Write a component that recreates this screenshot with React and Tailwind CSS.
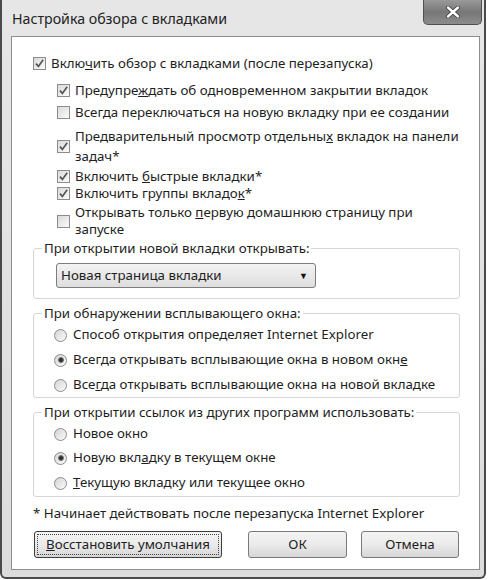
import React from "react";

const TEXT = "text-[13.3px] text-[#1e1e1e]";

function Check({ checked }) {
  return (
    <span className="flex h-[13px] w-[13px] shrink-0 items-center justify-center border border-[#8c8c8c] bg-linear-to-br from-[#d9d9d9] to-[#fbfbfb]">
      {checked && (
        <svg width="11" height="11" viewBox="0 0 11 11">
          <path d="M2 5.6 L4.4 8.4 L9.2 1.8" fill="none" stroke="#555" strokeWidth="1.7" />
        </svg>
      )}
    </span>
  );
}

function Radio({ on }) {
  return (
    <span className="flex h-[13px] w-[13px] shrink-0 items-center justify-center rounded-full border border-[#8c8c8c] bg-linear-to-br from-[#d4d4d4] to-[#fbfbfb]">
      {on && <span className="h-[6px] w-[6px] rounded-full border border-[#777] bg-[#2e2e2e]" />}
    </span>
  );
}

function CheckRow({ checked, indent, className, children }) {
  return (
    <div className={`flex items-center gap-[5px] ${indent ? "ml-[24px]" : ""} ${className}`}>
      <Check checked={checked} />
      <span>{children}</span>
    </div>
  );
}

function RadioRow({ on, className, children }) {
  return (
    <div className={`ml-[12px] flex h-[18px] items-center gap-[6px] ${className}`}>
      <Radio on={on} />
      <span>{children}</span>
    </div>
  );
}

function Group({ title, className, children }) {
  return (
    <fieldset className={`rounded-[3px] border border-[#d6d6d6] pl-[8px] pr-[8px] ${className}`}>
      <legend className="px-[2px] leading-[18px]">{title}</legend>
      {children}
    </fieldset>
  );
}

function Button({ focused, className, children }) {
  return (
    <div
      className={`flex h-[27px] rounded-[3px] border bg-linear-to-b from-[#f4f4f4] via-[#ebebeb] to-[#d6d6d6] ${
        focused ? "border-[#3c3c3c]" : "border-[#7a7a7a]"
      } ${className}`}
    >
      <div
        className={`m-[2px] flex flex-1 items-center justify-center border ${
          focused ? "border-dotted border-[#444]" : "border-transparent"
        }`}
      >
        {children}
      </div>
    </div>
  );
}

export default function App() {
  return (
    <div className="h-[580px] w-[489px] bg-white">
      <div className="flex h-[579px] w-[486px] flex-col rounded-b-[6px] border-x-2 border-b-2 border-[#4a4a4a] bg-linear-to-b from-[#e6e6e6] to-[#dcdcdc] font-['Noto_Sans','Liberation_Sans',sans-serif]">
        {/* Title bar */}
        <div className="flex h-[36px] shrink-0 items-start justify-between">
          <div className="pl-[10px] pt-[9px] text-[14.2px] leading-[20px] text-[#222]">
            Настройка обзора с вкладками
          </div>
          <div className="mr-[2px] flex h-[25px] w-[59px] items-center justify-center rounded-b-[5px] border border-t-0 border-[#4f4f4f] bg-linear-to-b from-[#9a9a9a] via-[#777] to-[#8c8c8c]">
            <svg width="16" height="12" viewBox="0 0 16 12">
              <path d="M3 1.5 L13 10.5 M13 1.5 L3 10.5" stroke="#3a3a3a" strokeWidth="4" strokeLinecap="round" />
              <path d="M3 1.5 L13 10.5 M13 1.5 L3 10.5" stroke="#fff" strokeWidth="2.4" strokeLinecap="round" />
            </svg>
          </div>
        </div>

        {/* Content panel */}
        <div className={`mb-[7px] ml-[9px] mr-[4px] flex-1 border border-[#8e8e8e] bg-white pl-[21px] pr-[19px] pt-[17px] ${TEXT}`}>
          <CheckRow checked className="leading-[18px]">
            Вклю<u>ч</u>ить обзор с вкладками (после перезапуска)
          </CheckRow>
          <CheckRow checked indent className="mt-[9px] leading-[18px]">
            Предупре<u>ж</u>дать об одновременном закрытии вкладок
          </CheckRow>
          <CheckRow indent className="mt-[4px] leading-[18px]">
            Всегда переключаться на новую вкладку при ее создании
          </CheckRow>
          <CheckRow checked indent className="mt-[5px] leading-[20px]">
            Предварительный просмотр отдельны<u>х</u> вкладок на панели
            <br />
            задач*
          </CheckRow>
          <CheckRow checked indent className="mt-[2px] leading-[17px]">
            Включить <u>б</u>ыстрые вкладки*
          </CheckRow>
          <CheckRow checked indent className="leading-[17px]">
            Включить группы вкладо<u>к</u>*
          </CheckRow>
          <CheckRow indent className="mt-[2px] leading-[17px]">
            Открывать только <u>п</u>ервую домашнюю страницу при
            <br />
            запуске
          </CheckRow>

          <Group title="При открытии новой вкладки открывать:" className="mt-[1px] pb-[10px]">
            <div className="ml-[14px] mt-[6px] flex h-[25px] w-[260px] items-center justify-between rounded-[3px] border border-[#7d7d7d] bg-linear-to-b from-[#f3f3f3] to-[#dedede] pl-[4px] pr-[7px]">
              <span>Новая страница вкладки</span>
              <span className="text-[9px] text-[#111]">▼</span>
            </div>
          </Group>

          <Group title="При обнаружении всплывающего окна:" className="mt-[5px] pb-[3px]">
            <RadioRow className="mt-[4px]">Способ открытия определяет Internet Explorer</RadioRow>
            <RadioRow on className="mt-[7px]">
              Всегда открывать всплывающие окна в новом окн<u>е</u>
            </RadioRow>
            <RadioRow className="mt-[7px]">
              Все<u>г</u>да открывать всплывающие окна на новой вкладке
            </RadioRow>
          </Group>

          <Group title="При открытии ссылок из других программ использовать:" className="mt-[5px] pb-[4px]">
            <RadioRow className="mt-[4px]">Новое окно</RadioRow>
            <RadioRow on className="mt-[6px]">
              Новую вкл<u>а</u>дку в текущем окне
            </RadioRow>
            <RadioRow className="mt-[7px]">
              <u>Т</u>екущую вкладку или текущее окно
            </RadioRow>
          </Group>

          <div className="mt-[7px] leading-[18px]">* Начинает действовать после перезапуска Internet Explorer</div>

          <div className="mt-[9px] flex">
            <Button focused className="ml-[1px] w-[188px]">
              <span>
                <u>В</u>осстановить умолчания
              </span>
            </Button>
            <Button className="ml-[26px] w-[99px]">ОК</Button>
            <Button className="ml-[14px] w-[98px]">Отмена</Button>
          </div>
        </div>
      </div>
    </div>
  );
}
